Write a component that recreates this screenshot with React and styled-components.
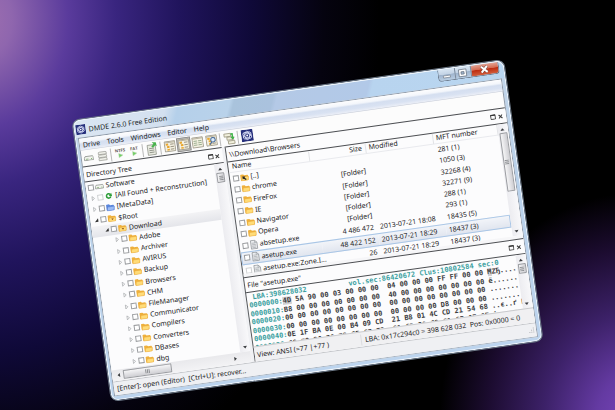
import React from "react";
import styled, { createGlobalStyle, css } from "styled-components";

const Global = createGlobalStyle`
  * { box-sizing: border-box; }
  html, body { margin: 0; height: 100%; }
  body { overflow: hidden; }
  #root { height: 100%; }
  button, input, select { font: inherit; color: inherit; }
`;

const Stage = styled.main`
  min-height: 100vh;
  display: flex;
  align-items: center;
  justify-content: center;
  padding-top: 50px;
  overflow: hidden;
  background:
    radial-gradient(ellipse 200px 230px at 104% 103%, #7b48bd 0%, #643aa2 22%, #3c2168 48%, #1c0c30 76%, rgba(8, 3, 16, 0) 100%),
    radial-gradient(ellipse 400px 490px at -20px 20px, #a070b0 0%, #8f66ae 8%, #5a3b9c 22%, #39257f 34%, #20145c 50%, #0f0938 68%, #05030f 86%, rgba(0, 0, 0, 0) 100%),
    #000;
`;

const Window = styled.section`
  width: 71%;
  min-width: 420px;
  flex: none;
  padding: 0 4px 4px 3px;
  border: 1px solid #6e7a88;
  border-radius: 8px;
  background: linear-gradient(to bottom, #c3d6ea, #b9d1ea 40%, #bcd4ee);
  box-shadow: inset 0 0 0 1px #f2f7fc;
  transform: rotate(-8deg);
  font-family: "Noto Sans", "Open Sans", sans-serif;
  font-size: 7px;
  line-height: 11px;
  color: #222224;
  white-space: pre;
`;

const TitleBar = styled.header`
  display: flex;
  align-items: flex-start;
  height: 18px;
  padding-left: 1px;
  gap: 3px;
  margin: 0 -3px 0 -2px;
  border-top: 1px solid #eef5fb;
  border-radius: 7px 7px 0 0;
  background: linear-gradient(112deg, #dbe6f2 0, #d3e0ef 21%, #b5d0ea 24%, #b9d2ea 36%, #a9c3dc 37%, #aac2de 46%, #b4c9e6 47%, #b2c9e8 68%, #b8d4ef 69%, #b9d6f0 100%);
`;

const Title = styled.h1`
  flex: 1;
  margin: 4px 0 0;
  font-size: 7px;
  font-weight: 400;
  color: #1a1e26;
`;

const AppIconBox = styled.span`
  display: flex;
  margin-top: 4px;
`;

const Caption = styled.div`
  display: flex;
  height: 12px;
  margin-right: 4px;
  border: 1px solid #6f7c8d;
  border-top: 0;
  border-radius: 0 0 4px 4px;
  overflow: hidden;
`;

const CaptionButton = styled.button`
  width: ${(p) => (p.$close ? 28 : 16)}px;
  padding: 0;
  border: 0;
  border-left: ${(p) => (p.$first ? "0" : "1px solid #7d8999")};
  display: flex;
  align-items: center;
  justify-content: center;
  background: ${(p) =>
    p.$close
      ? "linear-gradient(#e3a596, #d56b52 45%, #bd2c10 50%, #d2603f)"
      : "linear-gradient(#d8e5f2, #c3d3e5 45%, #9fb4cd 50%, #b9cde2)"};
`;

const Client = styled.div`
  border: 1px solid #8d99a8;
  border-bottom-color: #a8b4c2;
  background: #fcfcfc;
`;

const MenuBar = styled.nav`
  display: flex;
  gap: 7px;
  height: 12px;
  padding-left: 3px;
  background: linear-gradient(#fdfdfe 0, #f3f6fb 30%, #d5dff0 45%, #d9e2f2 70%, #e9edf6 92%, #c8cdd8 100%);
`;

const MenuItem = styled.button`
  padding: 0;
  border: 0;
  background: none;
  line-height: 11px;
`;

const ToolBar = styled.div`
  display: flex;
  align-items: center;
  height: 16px;
`;

const ToolButton = styled.button`
  width: 14px;
  height: 14px;
  padding: 0;
  border: 1px solid ${(p) => (p.$pressed ? "#8b8b8b" : "transparent")};
  background: ${(p) => (p.$pressed ? "#c9c9c6" : "none")};
  display: flex;
  align-items: center;
  justify-content: center;
`;

const Separator = styled.span`
  width: 1px;
  height: 13px;
  margin: 0 2px 0 1px;
  background: #b9b9b9;
`;

const Panes = styled.div`
  display: grid;
  grid-template-columns: 33% minmax(0, 1fr);
  column-gap: 3px;
  background: #f0f1f4;
`;

const Pane = styled.section`
  display: flex;
  flex-direction: column;
  min-width: 0;
  background: #fcfcfd;
  ${(p) => p.$framed && css`border-left: 1px solid #55585c;`}
`;

const PaneHeader = styled.header`
  display: flex;
  align-items: center;
  height: 16px;
  padding: 0 2px 0 2px;
  border-top: 1px solid #4c4e52;
  border-bottom: 1px solid #4c4e52;
`;

const PaneTitle = styled.h2`
  flex: 1;
  margin: 0;
  font-size: 7px;
  font-weight: 400;
`;

const PaneButton = styled.button`
  width: 7px;
  height: 8px;
  padding: 0;
  border: 0;
  background: none;
  display: flex;
  align-items: center;
  justify-content: center;
`;

const PaneBody = styled.div`
  display: flex;
  height: ${(p) => p.$height}px;
  overflow: hidden;
`;

const Tree = styled.ul`
  flex: 1;
  min-width: 0;
  margin: 0;
  padding: 0;
  list-style: none;
  display: grid;
  grid-auto-rows: 1fr;
`;

const TreeRow = styled.li`
  display: flex;
  align-items: center;
  padding-left: ${(p) => 2 + p.$level * 9}px;
  background: ${(p) => (p.$selected ? "linear-gradient(#f3f3f5, #e4e5ea)" : "none")};
`;

const Label = styled.label`
  display: flex;
  align-items: center;
`;

const Expander = styled.button`
  width: 8px;
  height: 8px;
  padding: 0;
  border: 0;
  background: none;
  display: flex;
  align-items: center;
  justify-content: center;
`;

const Check = styled.input`
  appearance: none;
  flex: none;
  width: 6px;
  height: 6px;
  margin: 0 1px 0 0;
  border: 1px solid ${(p) => (p.$soft ? "#cfd1d3" : "#9b9da0")};
  background: #fff;
`;

const IconSlot = styled.span`
  flex: none;
  width: 9px;
  margin-right: ${(p) => p.$gap}px;
  display: flex;
  justify-content: center;
`;

const ScrollColumn = styled.div`
  flex: none;
  width: 10px;
  display: flex;
  flex-direction: column;
  align-items: center;
  padding: 2px 0;
  background: linear-gradient(to right, #ececf0, #f8f8fa);
`;

const ScrollRow = styled.div`
  display: flex;
  align-items: center;
  height: 11px;
  padding: 0 12px 0 2px;
  background: linear-gradient(#e9e9ec, #f3f3f5);
`;

const ScrollArrow = styled.button`
  width: 8px;
  height: 6px;
  padding: 0;
  border: 0;
  background: none;
  display: flex;
  align-items: center;
  justify-content: center;
`;

const Thumb = styled.span`
  flex: 0 0 ${(p) => p.$size};
  ${(p) => (p.$row ? "height: 9px;" : "width: 8px;")}
  margin: ${(p) => (p.$row ? "0 auto 0 1px" : "1px 0 auto")};
  border: 1px solid #9a9ca0;
  border-radius: 1px;
  background: linear-gradient(${(p) => (p.$row ? "to bottom" : "to right")}, #f6f6f7, #e2e2e5 50%, #cfcfd3);
  display: flex;
  align-items: center;
  justify-content: center;
`;

const FileScroller = styled.div`
  flex: 1;
  min-width: 0;
  height: 116px;
`;

const FileTable = styled.table`
  width: 100%;
  height: 116px;
  table-layout: fixed;
  border-spacing: 0;
`;

const Col = styled.col`
  width: ${(p) => p.$width};
`;

const HeadCell = styled.th`
  height: 11px;
  padding: 0 3px;
  line-height: 10px;
  font-weight: 400;
  text-align: ${(p) => (p.$right ? "right" : "left")};
  border-right: 1px solid #e2e3e6;
  border-bottom: 1px solid #e9eaee;
`;

const FileRow = styled.tr`
  ${(p) =>
    p.$selected &&
    css`
      background: linear-gradient(#f4f6fa, #dfe4ee);
      outline: 1px solid #a9c6e6;
      outline-offset: -1px;
    `}
`;

const Cell = styled.td`
  padding: 0 3px;
  line-height: 9px;
  text-align: ${(p) => (p.$right ? "right" : "left")};
`;

const Splitter = styled.div`
  height: 3px;
  background: #f6f6f8;
`;

const HexView = styled.div`
  flex: 1;
  min-width: 0;
  height: 60px;
  display: grid;
  grid-auto-rows: 1fr;
  padding: 1px 0 0 1px;
  font-family: "DejaVu Sans Mono", "Liberation Mono", monospace;
  font-size: 7px;
  font-weight: 700;
  line-height: 8px;
`;

const HexLine = styled.div`
  color: #3a3a3c;
`;

const Teal = styled.span`
  color: #3a9f9f;
`;

const Cursor = styled.mark`
  color: inherit;
  background: #cfcfd2;
`;

const ViewBar = styled.footer`
  display: grid;
  grid-template-columns: 38% 1fr;
  align-items: center;
  height: 15px;
  background: #f0f0f2;
  border-top: 1px solid #c9cacd;
`;

const ViewCell = styled.span`
  padding-left: 2px;
  ${(p) => p.$divided && css`border-left: 1px solid #dadbde; padding-left: 3px;`}
`;

const StatusBar = styled.footer`
  display: flex;
  align-items: center;
  justify-content: space-between;
  height: 14px;
  padding: 0 1px 0 3px;
  background: #eff0f3;
  border-top: 1px solid #c4c6ca;
`;

const AppIcon = ({ size }) => (
  <svg width={size} height={size} viewBox="0 0 20 20">
    <rect width="20" height="20" fill="#27307c" />
    <g fill="none" stroke="#d7dcf4" strokeWidth="1.5">
      <ellipse cx="10" cy="10" rx="7.5" ry="4" transform="rotate(30 10 10)" />
      <ellipse cx="10" cy="10" rx="7.5" ry="4" transform="rotate(-30 10 10)" />
      <ellipse cx="10" cy="10" rx="4" ry="7" />
    </g>
    <circle cx="10" cy="10" r="1.6" fill="#fff" />
  </svg>
);

const Folder = ({ blue, mark }) => (
  <svg width="9" height="8" viewBox="0 0 18 16">
    <path d="M1 3.5Q1 2 2.5 2H7l2 2h6q1.500 0 1.500 1.500V14H2.500Q1 14 1 12.500Z" fill={blue ? "#5a86dc" : "#eeb03c"} />
    <path d="M3.500 7H17.500L15.500 14.500H2Z" fill={blue ? "#9cbcf5" : "#ffdc78"} stroke={blue ? "#4a74cf" : "#ebaa3a"} />
    {mark === "dot" && <path d="M7.500 9h5L10 12Z" fill="#8a4a10" />}
    {mark === "up" && <path d="M5 6l6 1-2 2 4 3-2 2-4-3-2 1Z" fill="#222" />}
  </svg>
);

const DriveIcon = ({ width = 9 }) => (
  <svg width={width} height={width * 0.65} viewBox="0 0 20 13">
    <path d="M3 3h15l1 2v6H1V6Z" fill="#f2f4ee" stroke="#7f8580" strokeWidth="1.4" />
    <path d="M4 8.500h5" stroke="#7aa86a" strokeWidth="1.500" />
    <circle cx="15.500" cy="8.500" r="1" fill="#5ca448" />
  </svg>
);

const Recycle = () => (
  <svg width="7" height="7" viewBox="0 0 16 16">
    <path d="M12.500 10a5 5 0 1 1-.5-4.500" fill="none" stroke="#2f9e3a" strokeWidth="3.600" />
    <path d="M8 8.500L15.500 9.500L14.500 2Z" fill="#2f9e3a" />
  </svg>
);

const Doc = () => (
  <svg width="9" height="10" viewBox="0 0 18 20">
    <path d="M3 1.500h8l4.500 4.500v12.500H3Z" fill="#eceef0" stroke="#85898e" strokeWidth="1.300" />
    <path d="M5 7h7M5 10h8M5 13h8M5 16h8M11 1.500V6h4.500" stroke="#9a9ea3" strokeWidth="1.200" fill="none" />
  </svg>
);

const StackIcon = () => (
  <svg width="10" height="11" viewBox="0 0 20 22">
    {[2, 8, 14].map((y) => (
      <path key={y} d={`M2 ${y + 1}l2-1h12l2 1v4H2Z`} fill="#f0f1ea" stroke="#94968f" strokeWidth="1.300" />
    ))}
  </svg>
);

const FsIcon = ({ name }) => (
  <svg width="13" height="12" viewBox="0 0 26 24">
    <text x="13" y="9" textAnchor="middle" fontFamily="Open Sans, sans-serif" fontSize="9" fontWeight="700" fill="#5d5550">{name}</text>
    <path d="M9 12l9 4.500-9 5Z" fill="#6fce62" stroke="#c9dcc2" />
  </svg>
);

const NewIcon = () => (
  <svg width="12" height="14" viewBox="0 0 24 28">
    <path d="M3 6h16v20H3Z" fill="#e9ebe0" stroke="#8f9288" strokeWidth="1.500" />
    <path d="M6 13h10M6 17h10M6 21h10" stroke="#8f9288" strokeWidth="1.800" />
    <path d="M13 1l8 1 1 8-3-2-5 4-3-3 5-4Z" fill="#48b34c" />
  </svg>
);

const PanelIcon = ({ kind }) => (
  <svg width="12" height="12" viewBox="0 0 24 24">
    <rect x="1.500" y="2" width="21" height="20" fill="#f4f1e2" stroke="#9b9584" strokeWidth="1.600" />
    <path d="M2 4h20" stroke="#b8b2a0" strokeWidth="2" />
    {kind === "list" ? (
      <path d="M4 9h7M13 9h7M4 13h7M13 13h7M4 17h7M13 17h7" stroke="#92a888" strokeWidth="1.700" />
    ) : (
      <>
        <path d="M4 6h5v4h-5ZM6 11h5v4h-5ZM6 17h5v3h-5Z" fill="#e9a730" />
        <path d="M13 8h7M13 13h7M13 18h7" stroke="#8f8878" strokeWidth="1.700" />
      </>
    )}
    {kind === "find" && (
      <>
        <circle cx="15" cy="11" r="4.500" fill="#dcebfa" stroke="#4d6f9d" strokeWidth="2" />
        <path d="M12 15l-4 5" stroke="#4d6f9d" strokeWidth="2.500" />
      </>
    )}
  </svg>
);

const CopyIcon = () => (
  <svg width="12" height="13" viewBox="0 0 24 26">
    <path d="M2 3h13v6H2ZM7 10h13v6H7ZM9 18h13v6H9Z" fill="#f1efdc" stroke="#98947c" strokeWidth="1.500" />
    <path d="M15 3h5v8h3l-4.500 5-4.500-5h3V6h-2Z" fill="#3fb548" />
  </svg>
);

const Tri = ({ dir }) => {
  const turn = { up: 0, right: 90, down: 180, left: 270 }[dir];
  return (
    <svg width="5" height="5" viewBox="0 0 10 10">
      <path d="M5 2.500L9 7.500H1Z" fill="#3b3d40" transform={`rotate(${turn} 5 5)`} />
    </svg>
  );
};

const Branch = ({ open }) => (
  <svg width="6" height="6" viewBox="0 0 12 12">
    {open ? (
      <path d="M9.500 2.500V9.500H2.500Z" fill="#333" />
    ) : (
      <path d="M3.500 2L8 6L3.500 10Z" fill="#fff" stroke="#a2a5a8" strokeWidth="1.300" />
    )}
  </svg>
);

const Grip = ({ row }) => (
  <svg width="5" height="5" viewBox="0 0 10 10">
    <path d="M1 1.500h8M1 5h8M1 8.500h8" stroke="#74777b" strokeWidth="1.500" transform={row ? "rotate(90 5 5)" : undefined} />
  </svg>
);

const PaneControls = () => (
  <>
    <PaneButton aria-label="Maximize pane">
      <svg width="6" height="6" viewBox="0 0 12 12">
        <path d="M1.500 2.500h9v8h-9Z" fill="none" stroke="#333" strokeWidth="1.600" />
        <path d="M1 2.500h10" stroke="#333" strokeWidth="2.500" />
      </svg>
    </PaneButton>
    <PaneButton aria-label="Close pane">
      <svg width="5" height="5" viewBox="0 0 10 10">
        <path d="M1.500 1.500l7 7M8.500 1.500l-7 7" stroke="#333" strokeWidth="2" />
      </svg>
    </PaneButton>
  </>
);

const VerticalScroll = ({ size }) => (
  <ScrollColumn>
    <ScrollArrow aria-label="Scroll up"><Tri dir="up" /></ScrollArrow>
    <Thumb $size={size}><Grip /></Thumb>
    <ScrollArrow aria-label="Scroll down"><Tri dir="down" /></ScrollArrow>
  </ScrollColumn>
);

const tree = [
  { name: "Software", level: 0, icon: <DriveIcon />, leaf: true },
  { name: "[All Found + Reconstruction]", level: 0, icon: <Recycle />, soft: true },
  { name: "[MetaData]", level: 0, icon: <Folder blue /> },
  { name: "$Root", level: 0, icon: <Folder mark="dot" />, open: true },
  { name: "Download", level: 1, icon: <Folder mark="dot" />, open: true, selected: true },
  ...["Adobe", "Archiver", "AVIRUS", "Backup", "Browsers", "CHM", "FileManager", "Communicator", "Compilers", "Converters", "DBases", "dbg"].map(
    (name) => ({ name, level: 2, icon: <Folder /> })
  ),
];

const files = [
  { name: "[..]", icon: <Folder mark="up" />, size: "", date: "", mft: "281 (1)" },
  { name: "chrome", icon: <Folder />, size: "[Folder]", date: "", mft: "1050 (3)" },
  { name: "FireFox", icon: <Folder />, size: "[Folder]", date: "", mft: "32268 (4)" },
  { name: "IE", icon: <Folder />, size: "[Folder]", date: "", mft: "32271 (9)" },
  { name: "Navigator", icon: <Folder />, size: "[Folder]", date: "", mft: "288 (1)" },
  { name: "Opera", icon: <Folder />, size: "[Folder]", date: "", mft: "293 (1)" },
  { name: "absetup.exe", icon: <Doc />, size: "4 486 472", date: "2013-07-21 18:08", mft: "18435 (5)" },
  { name: "asetup.exe", icon: <Doc />, size: "48 422 152", date: "2013-07-21 18:29", mft: "18437 (3)", selected: true },
  { name: "asetup.exe:Zone.I...", icon: <Doc />, size: "26", date: "2013-07-21 18:29", mft: "18437 (3)", soft: true },
];

const hex = [
  ["0000010", "B8 00 00 00 00 00 00 00  40 00 00 00 00 00 00 00 ё......"],
  ["0000020", "00 00 00 00 00 00 00 00  00 00 00 00 00 00 00 00 ......."],
  ["0000030", "00 00 00 00 00 00 00 00  00 00 00 00 D8 00 00 00 ......."],
  ["0000040", "0E 1F BA 0E 00 B4 09 CD  21 B8 01 4C CD 21 54 68 ..є..ґ h"],
  ["0000050", "69 73 20 70 72 6F 67 72  61 6D 20 63 61 6E 6E 6F is prog"],
];

export default function App() {
  return (
    <>
      <Global />
      <Stage>
        <Window aria-label="DMDE 2.6.0 Free Edition">
          <TitleBar>
            <AppIconBox><AppIcon size={10} /></AppIconBox>
            <Title>DMDE 2.6.0 Free Edition</Title>
            <Caption>
              <CaptionButton $first aria-label="Minimize">
                <svg width="10" height="8" viewBox="0 0 20 16"><rect x="3" y="9" width="14" height="4" fill="#fff" stroke="#5b6573" /></svg>
              </CaptionButton>
              <CaptionButton aria-label="Maximize">
                <svg width="10" height="10" viewBox="0 0 20 20">
                  <path d="M2.500 3h15v14h-15Z M7 7.500h6v5H7Z" fill="#fff" fillRule="evenodd" stroke="#5b6573" strokeWidth="1.300" />
                </svg>
              </CaptionButton>
              <CaptionButton $close aria-label="Close">
                <svg width="10" height="9" viewBox="0 0 20 18">
                  <path d="M4 3L16 15M16 3L4 15" stroke="#74453e" strokeWidth="6" />
                  <path d="M4 3L16 15M16 3L4 15" stroke="#fff" strokeWidth="4" />
                </svg>
              </CaptionButton>
            </Caption>
          </TitleBar>
          <Client>
            <MenuBar>
              {["Drive", "Tools", "Windows", "Editor", "Help"].map((m) => <MenuItem key={m}>{m}</MenuItem>)}
            </MenuBar>
            <ToolBar>
              <ToolButton aria-label="Select drive"><DriveIcon width={10} /></ToolButton>
              <ToolButton aria-label="Partitions"><StackIcon /></ToolButton>
              <Separator />
              <ToolButton aria-label="NTFS search"><FsIcon name="NTFS" /></ToolButton>
              <ToolButton aria-label="FAT search"><FsIcon name="FAT" /></ToolButton>
              <Separator />
              <ToolButton aria-label="Recover"><NewIcon /></ToolButton>
              <Separator />
              <ToolButton aria-label="Tree panel"><PanelIcon kind="tree" /></ToolButton>
              <ToolButton $pressed aria-label="File panel"><PanelIcon kind="tree" /></ToolButton>
              <ToolButton aria-label="Editor panel"><PanelIcon kind="list" /></ToolButton>
              <ToolButton aria-label="Find"><PanelIcon kind="find" /></ToolButton>
              <Separator />
              <ToolButton aria-label="Copy sectors"><CopyIcon /></ToolButton>
              <Separator />
              <ToolButton aria-label="About"><AppIcon size={12} /></ToolButton>
            </ToolBar>
            <Panes>
              <Pane>
                <PaneHeader>
                  <PaneTitle>Directory Tree</PaneTitle>
                  <PaneControls />
                </PaneHeader>
                <PaneBody $height={190}>
                  <Tree>
                    {tree.map((n) => (
                      <TreeRow key={n.name} $level={n.level} $selected={n.selected}>
                        {!n.leaf && <Expander aria-label={`Toggle ${n.name}`}><Branch open={n.open} /></Expander>}
                        <Label>
                          <Check type="checkbox" $soft={n.soft} />
                          <IconSlot $gap={2}>{n.icon}</IconSlot>
                          {n.name}
                        </Label>
                      </TreeRow>
                    ))}
                  </Tree>
                  <VerticalScroll size="10px" />
                </PaneBody>
                <ScrollRow>
                  <ScrollArrow aria-label="Scroll left"><Tri dir="left" /></ScrollArrow>
                  <Thumb $row $size="39%"><Grip row /></Thumb>
                  <ScrollArrow aria-label="Scroll right"><Tri dir="right" /></ScrollArrow>
                </ScrollRow>
              </Pane>
              <Pane $framed>
                <PaneHeader>
                  <PaneTitle>\\Download\Browsers</PaneTitle>
                  <PaneControls />
                </PaneHeader>
                <PaneBody $height={113}>
                  <FileScroller>
                    <FileTable>
                      <colgroup>
                        <Col $width="30%" />
                        <Col $width="21%" />
                        <Col $width="25%" />
                        <Col $width="24%" />
                      </colgroup>
                      <thead>
                        <tr>
                          <HeadCell>Name</HeadCell>
                          <HeadCell $right>Size</HeadCell>
                          <HeadCell>Modified</HeadCell>
                          <HeadCell>MFT number</HeadCell>
                        </tr>
                      </thead>
                      <tbody>
                        {files.map((f) => (
                          <FileRow key={f.name} $selected={f.selected}>
                            <Cell>
                              <Label>
                                <Check type="checkbox" $soft={f.soft} />
                                <IconSlot $gap={1}>{f.icon}</IconSlot>
                                {f.name}
                              </Label>
                            </Cell>
                            <Cell $right>{f.size}</Cell>
                            <Cell>{f.date}</Cell>
                            <Cell>{f.mft}</Cell>
                          </FileRow>
                        ))}
                      </tbody>
                    </FileTable>
                  </FileScroller>
                  <VerticalScroll size="59px" />
                </PaneBody>
                <Splitter />
                <PaneHeader>
                  <PaneTitle>File "asetup.exe"</PaneTitle>
                  <PaneControls />
                </PaneHeader>
                <PaneBody $height={54}>
                  <HexView>
                    <HexLine><Teal>{" LBA:398628032          vol.sec:86420672 Clus:10802584 sec:0"}</Teal></HexLine>
                    <HexLine>
                      <Teal>0000000:</Teal><Cursor>4D</Cursor>{" 5A 90 00 03 00 00 00  04 00 00 00 FF FF 00 00 "}<Cursor>M</Cursor>{"ZЂ...."}
                    </HexLine>
                    {hex.map(([offset, bytes]) => (
                      <HexLine key={offset}><Teal>{offset}:</Teal>{bytes}</HexLine>
                    ))}
                  </HexView>
                  <VerticalScroll size="10px" />
                </PaneBody>
                <ViewBar>
                  <ViewCell>View: ANSI (=77 |+77 )</ViewCell>
                  <ViewCell $divided>{"LBA: 0x17c294c0 = 398 628 032  Pos: 0x0000 = 0"}</ViewCell>
                </ViewBar>
              </Pane>
            </Panes>
            <StatusBar>
              <span>{"[Enter]: open (Editor)  [Ctrl+U]: recover..."}</span>
              <svg width="7" height="7" viewBox="0 0 14 14">
                <path d="M10 10h2v2h-2ZM6 10h2v2h-2ZM2 10h2v2h-2ZM10 6h2v2h-2ZM6 6h2v2h-2ZM10 2h2v2h-2Z" fill="#b3b5b9" />
              </svg>
            </StatusBar>
          </Client>
        </Window>
      </Stage>
    </>
  );
}
